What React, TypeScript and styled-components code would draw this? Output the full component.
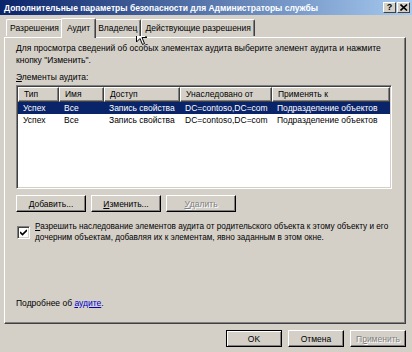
import React from "react";
import styled, { createGlobalStyle } from "styled-components";

const GlobalStyle = createGlobalStyle`
  html, body {
    margin: 0;
    padding: 0;
    background: #d4d0c8;
  }
  body {
    font-family: "Liberation Sans", Arial, sans-serif;
    font-size: 8.5px;
    color: #000;
  }
`;

const Window = styled.div`
  position: relative;
  width: 412px;
  height: 352px;
  background: #d4d0c8;
  display: flex;
  flex-direction: column;
  overflow: hidden;
`;

const TitleBar = styled.div`
  height: 15px;
  flex: none;
  display: flex;
  align-items: center;
  justify-content: space-between;
  padding: 0 2px 0 4px;
  background: linear-gradient(to right, #0a246a, #a6caf0);
`;

const Title = styled.span`
  color: #fff;
  font-weight: bold;
  font-size: 8.5px;
  white-space: nowrap;
`;

const Controls = styled.div`
  display: flex;
  gap: 1px;
`;

const CaptionButton = styled.div`
  width: 13px;
  height: 11px;
  box-sizing: border-box;
  background: #d4d0c8;
  border-top: 1px solid #fff;
  border-left: 1px solid #fff;
  border-right: 1px solid #404040;
  border-bottom: 1px solid #404040;
  display: flex;
  align-items: center;
  justify-content: center;
  font-weight: bold;
  font-size: 9px;
  line-height: 1;
`;

const Body = styled.div`
  flex: 1;
  display: flex;
  flex-direction: column;
  padding: 2px 6px 0 4px;
`;

const TabStrip = styled.div`
  display: flex;
  align-items: flex-end;
  height: 20px;
  padding-left: 2px;
  position: relative;
  z-index: 1;
`;

const Tab = styled.div<{ $active?: boolean }>`
  box-sizing: border-box;
  height: ${({ $active }) => ($active ? "20px" : "17px")};
  padding: ${({ $active }) => ($active ? "0 5px 2px" : "0 3px")};
  margin: ${({ $active }) => ($active ? "0 -2px" : "0")};
  margin-bottom: ${({ $active }) => ($active ? "-1px" : "1px")};
  display: flex;
  align-items: center;
  background: #d4d0c8;
  border-top: 1px solid #fff;
  border-left: 1px solid #fff;
  border-right: 1px solid #404040;
  border-radius: 2px 2px 0 0;
  box-shadow: inset -1px 0 0 #808080;
  white-space: nowrap;
  position: relative;
  z-index: ${({ $active }) => ($active ? 2 : 0)};
`;

const Panel = styled.div`
  box-sizing: border-box;
  height: 287px;
  display: flex;
  flex-direction: column;
  padding: 4px 13px 14px 11px;
  border-top: 1px solid #fff;
  border-left: 1px solid #fff;
  border-right: 1px solid #404040;
  border-bottom: 1px solid #404040;
  box-shadow: inset -1px -1px 0 #808080;
`;

const Text = styled.div`
  line-height: 12px;
  white-space: nowrap;
`;

const Label = styled.div`
  line-height: 12px;
  margin-top: 5px;
`;

const Key = styled.span`
  text-decoration: underline;
`;

const ListView = styled.div`
  box-sizing: border-box;
  height: 104px;
  margin-top: 2px;
  background: #fff;
  border-top: 1px solid #808080;
  border-left: 1px solid #808080;
  border-right: 1px solid #fff;
  border-bottom: 1px solid #fff;
  box-shadow: inset 1px 1px 0 #404040, inset -1px -1px 0 #d4d0c8;
  padding: 1px;
`;

const Grid = styled.div`
  display: grid;
  grid-template-columns: 41px 45px 76px 92px 1fr;
`;

const HeadCell = styled.div`
  box-sizing: border-box;
  height: 15px;
  line-height: 13px;
  padding-left: 5px;
  background: #d4d0c8;
  border-top: 1px solid #fff;
  border-left: 1px solid #fff;
  border-right: 1px solid #404040;
  border-bottom: 1px solid #404040;
  box-shadow: inset -1px -1px 0 #808080;
  white-space: nowrap;
  overflow: hidden;
`;

const Cell = styled.div<{ $selected?: boolean }>`
  height: 12px;
  line-height: 12px;
  padding-left: 5px;
  white-space: nowrap;
  overflow: hidden;
  background: ${({ $selected }) => ($selected ? "#0a246a" : "transparent")};
  color: ${({ $selected }) => ($selected ? "#fff" : "#000")};
`;

const ButtonRow = styled.div`
  display: flex;
  gap: 5px;
  margin-top: 6px;
`;

const Button = styled.div<{ $disabled?: boolean; $default?: boolean; $w?: number }>`
  box-sizing: border-box;
  width: ${({ $w }) => $w ?? 70}px;
  height: 17px;
  display: flex;
  align-items: center;
  justify-content: center;
  background: #d4d0c8;
  border-top: 1px solid ${({ $default }) => ($default ? "#000" : "#fff")};
  border-left: 1px solid ${({ $default }) => ($default ? "#000" : "#fff")};
  border-right: 1px solid #000;
  border-bottom: 1px solid #000;
  box-shadow: ${({ $default }) =>
    $default
      ? "inset 1px 1px 0 #fff, inset -1px -1px 0 #808080"
      : "inset -1px -1px 0 #808080"};
  color: ${({ $disabled }) => ($disabled ? "#808080" : "#000")};
  text-shadow: ${({ $disabled }) => ($disabled ? "1px 1px 0 #fff" : "none")};
`;

const CheckRow = styled.div`
  display: flex;
  align-items: center;
  gap: 5px;
  margin-top: 9px;
  padding-left: 1px;
`;

const CheckBox = styled.div`
  box-sizing: border-box;
  flex: none;
  width: 13px;
  height: 13px;
  background: #fff;
  border-top: 1px solid #808080;
  border-left: 1px solid #808080;
  border-right: 1px solid #fff;
  border-bottom: 1px solid #fff;
  box-shadow: inset 1px 1px 0 #404040, inset -1px -1px 0 #d4d0c8;
  display: flex;
  align-items: center;
  justify-content: center;
`;

const CheckText = styled.div`
  font-size: 8.2px;
  line-height: 11px;
  white-space: nowrap;
`;

const Spacer = styled.div`
  flex: 1;
`;

const Link = styled.a`
  color: #0000cc;
  text-decoration: underline;
`;

const Footer = styled.div`
  display: flex;
  justify-content: flex-end;
  gap: 6px;
  padding: 6px 0 0;
`;

const Cursor = styled.svg`
  position: absolute;
  left: 136px;
  top: 27px;
`;

const rows = [
  ["Успех", "Все", "Запись свойства", "DC=contoso,DC=com", "Подразделение объектов"],
  ["Успех", "Все", "Запись свойства", "DC=contoso,DC=com", "Подразделение объектов"],
];

const headers = ["Тип", "Имя", "Доступ", "Унаследовано от", "Применять к"];

export default function App() {
  return (
    <>
      <GlobalStyle />
      <Window>
        <TitleBar>
          <Title>Дополнительные параметры безопасности для Администраторы службы</Title>
          <Controls>
            <CaptionButton>?</CaptionButton>
            <CaptionButton>
              <svg width="8" height="7" viewBox="0 0 8 7">
                <path d="M0.5 0.5 L7 6.5 M7 0.5 L0.5 6.5" stroke="#000" strokeWidth="1.6" />
              </svg>
            </CaptionButton>
          </Controls>
        </TitleBar>
        <Body>
          <TabStrip>
            <Tab>Разрешения</Tab>
            <Tab $active>Аудит</Tab>
            <Tab>Владелец</Tab>
            <Tab>Действующие разрешения</Tab>
          </TabStrip>
          <Panel>
            <Text>
              Для просмотра сведений об особых элементах аудита выберите элемент аудита и нажмите
              <br />
              кнопку "Изменить".
            </Text>
            <Label>
              <Key>Э</Key>лементы аудита:
            </Label>
            <ListView>
              <Grid>
                {headers.map((h) => (
                  <HeadCell key={h}>{h}</HeadCell>
                ))}
                {rows.map((r, i) =>
                  r.map((c, j) => (
                    <Cell key={`${i}-${j}`} $selected={i === 0}>
                      {c}
                    </Cell>
                  ))
                )}
              </Grid>
            </ListView>
            <ButtonRow>
              <Button>
                <Key>Д</Key>обавить...
              </Button>
              <Button>
                <Key>И</Key>зменить...
              </Button>
              <Button $disabled>
                <Key>У</Key>далить
              </Button>
            </ButtonRow>
            <CheckRow>
              <CheckBox>
                <svg width="7" height="7" viewBox="0 0 7 7">
                  <path d="M0 3 L2.5 5.5 L7 1" fill="none" stroke="#000" strokeWidth="1.6" />
                </svg>
              </CheckBox>
              <CheckText>
                <Key>Р</Key>азрешить наследование элементов аудита от родительского объекта к этому объекту и его
                <br />
                дочерним объектам, добавляя их к элементам, явно заданным в этом окне.
              </CheckText>
            </CheckRow>
            <Spacer />
            <Text>
              Подробнее об <Link>аудите</Link>.
            </Text>
          </Panel>
          <Footer>
            <Button $default $w={56}>OK</Button>
            <Button $w={56}>Отмена</Button>
            <Button $disabled $w={56}>
              П<Key>р</Key>именить
            </Button>
          </Footer>
        </Body>
        <Cursor width="12" height="19" viewBox="0 0 12 19">
          <path
            d="M0.5 0.5 L0.5 15 L4 11.5 L6.5 17.5 L8.5 16.5 L6 10.5 L11 10.5 Z"
            fill="#fff"
            stroke="#000"
            strokeWidth="1"
          />
        </Cursor>
      </Window>
    </>
  );
}
